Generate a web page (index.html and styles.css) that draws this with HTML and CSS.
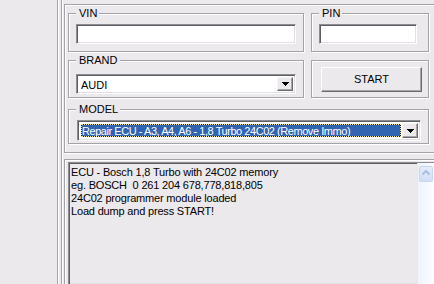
FILE: index.html
```html
<!DOCTYPE html>
<html>
<head>
<meta charset="utf-8">
<link rel="stylesheet" href="styles.css">
</head>
<body>
<div class="shell">
  <div class="inner">
    <div class="panel panel-top">
      <div class="grid">
        <div class="group g-vin">
          <span class="legend">VIN</span>
          <div class="edit edit-vin"></div>
        </div>
        <div class="group g-pin">
          <span class="legend">PIN</span>
          <div class="edit edit-pin"></div>
        </div>
        <div class="group g-brand">
          <span class="legend">BRAND</span>
          <div class="combo combo-brand">
            <span class="combo-text">AUDI</span>
            <span class="drop"><svg width="7" height="4" viewBox="0 0 7 4"><rect x="0" y="0" width="7" height="1"/><rect x="1" y="1" width="5" height="1"/><rect x="2" y="2" width="3" height="1"/><rect x="3" y="3" width="1" height="1"/></svg></span>
          </div>
        </div>
        <div class="group g-start">
          <div class="btn">START</div>
        </div>
        <div class="group g-model">
          <span class="legend">MODEL</span>
          <div class="combo combo-model">
            <span class="hl-wrap"><span class="hl">Repair ECU - A3, A4, A6 - 1,8 Turbo 24C02 (Remove Immo)</span></span>
            <span class="drop drop-model"><svg width="7" height="4" viewBox="0 0 7 4"><rect x="0" y="0" width="7" height="1"/><rect x="1" y="1" width="5" height="1"/><rect x="2" y="2" width="3" height="1"/><rect x="3" y="3" width="1" height="1"/></svg></span>
          </div>
        </div>
      </div>
    </div>
    <div class="panel panel-bottom">
      <div class="memo">
        <div class="memo-text">ECU - Bosch 1,8 Turbo with 24C02 memory
eg. BOSCH  0 261 204 678,778,818,805
24C02 programmer module loaded
Load dump and press START!</div>
        <div class="vscroll">
          <span class="sb-up"><svg width="12" height="14" viewBox="0 0 12 14"><polyline points="2.5,7.5 6,4 9.5,7.5" fill="none" stroke="#a9bde6" stroke-width="2"/></svg></span>
        </div>
      </div>
    </div>
  </div>
</div>
</body>
</html>
```

FILE: styles.css
```css
html, body {
  margin: 0;
  padding: 0;
}
body {
  width: 434px;
  height: 284px;
  overflow: hidden;
  background: #ece9ed;
  font-family: "Liberation Sans", Arial, sans-serif;
  font-size: 11px;
  line-height: 13px;
  color: #000;
}
.shell {
  box-sizing: border-box;
  margin-left: 57px;
  width: 377px;
  height: 284px;
  overflow: hidden;
  border-left: 1px solid #a3a2a7;
  box-shadow: inset 1px 0 #fff;
  padding-left: 3px;
}
.inner {
  box-sizing: border-box;
  height: 100%;
  border-left: 1px solid #a3a2a7;
  box-shadow: inset 1px 0 #fff;
  padding-left: 2px;
  display: flex;
  flex-direction: column;
}
.panel {
  box-sizing: border-box;
  width: 370px;
  flex: none;
  border: 1px solid #a3a2a7;
  border-right: none;
  box-shadow: inset 1px 1px #fff, 1px 1px #fff;
}
.panel-top {
  margin-top: 4px;
  height: 149px;
  padding: 8px 0 0 3px;
}
.grid {
  display: grid;
  grid-template-columns: 236px 118px;
  grid-template-rows: 39px 38px 38px;
  column-gap: 7px;
  row-gap: 8px;
}
.group {
  position: relative;
  box-sizing: border-box;
  border: 1px solid #a3a2a7;
  box-shadow: inset 1px 1px #fff, 1px 1px #fff;
  display: flex;
  align-items: flex-start;
}
.legend {
  position: absolute;
  top: -7px;
  left: 7px;
  padding: 0 2px 0 3px;
  background: #ece9ed;
  line-height: 13px;
  white-space: nowrap;
}
.g-vin { padding: 10px 0 0 7px; }
.g-pin { padding: 10px 0 0 7px; }
.g-brand { padding: 13px 0 0 7px; }
.g-start { padding: 6px 0 0 9px; }
.g-model {
  grid-column: 1 / -1;
  width: 361px;
  margin-top: 3px;
  padding: 10px 0 0 8px;
}
.edit, .combo, .memo {
  box-sizing: border-box;
  border: 1px solid;
  border-color: #8d8c91 #fff #fff #8d8c91;
  box-shadow: inset 1px 1px #5f5e63, inset -1px -1px #e2e0e5;
}
.edit {
  background: #fff;
  height: 20px;
}
.edit-vin { width: 220px; }
.edit-pin { width: 98px; }
.combo {
  background: #fff;
  display: flex;
  align-items: stretch;
  padding: 2px;
}
.combo-brand {
  width: 220px;
  height: 20px;
}
.combo-text {
  flex: 1;
  padding-left: 2px;
  line-height: 16px;
}
.combo-model {
  width: 344px;
  height: 21px;
}
.hl-wrap {
  flex: 1;
  margin: 1px;
  background: #1b1b1b;
  display: flex;
}
.hl {
  flex: 1;
  border: 1px dotted #f2e69a;
  background: #3164b1;
  background-clip: padding-box;
  color: #fff;
  line-height: 13px;
  letter-spacing: -0.45px;
  white-space: nowrap;
  overflow: hidden;
}
.drop {
  width: 16px;
  flex: none;
  box-sizing: border-box;
  background: #ece9ed;
  border: 1px solid;
  border-color: #f7f7f8 #6b6a6f #6b6a6f #f7f7f8;
  box-shadow: inset -1px -1px #a6a5aa;
  display: flex;
  align-items: center;
  justify-content: center;
}
.drop svg { fill: #000; display: block; }
.btn {
  box-sizing: border-box;
  width: 101px;
  height: 25px;
  background: #ece9ed;
  border: 1px solid;
  border-color: #fff #6b6a6f #6b6a6f #fff;
  box-shadow: inset -1px -1px #a6a5aa;
  display: flex;
  align-items: center;
  justify-content: center;
  padding-bottom: 1px;
}
.panel-bottom {
  margin-top: 6px;
  height: 125px;
  border-bottom: none;
  padding: 2px 0 0 3px;
}
.memo {
  width: 366px;
  height: 122px;
  border-right: none;
  border-bottom: none;
  background: #ece9ed;
  display: flex;
}
.memo-text {
  width: 348px;
  flex: none;
  padding: 3px 0 0 2px;
  box-sizing: border-box;
  white-space: pre;
  letter-spacing: -0.18px;
}
.vscroll {
  width: 17px;
  flex: none;
  box-sizing: border-box;
  border-left: 1px solid #dfe8f8;
  background: linear-gradient(to right, #eef3fd, #fbfcff);
  padding: 3px 1px 0 1px;
}
.sb-up {
  display: flex;
  align-items: center;
  justify-content: center;
  box-sizing: border-box;
  width: 14px;
  height: 16px;
  border: 1px solid #c7d5f2;
  border-radius: 2px;
  background: linear-gradient(#e4ecfc, #d3def6);
}
.sb-up svg { display: block; }
```
